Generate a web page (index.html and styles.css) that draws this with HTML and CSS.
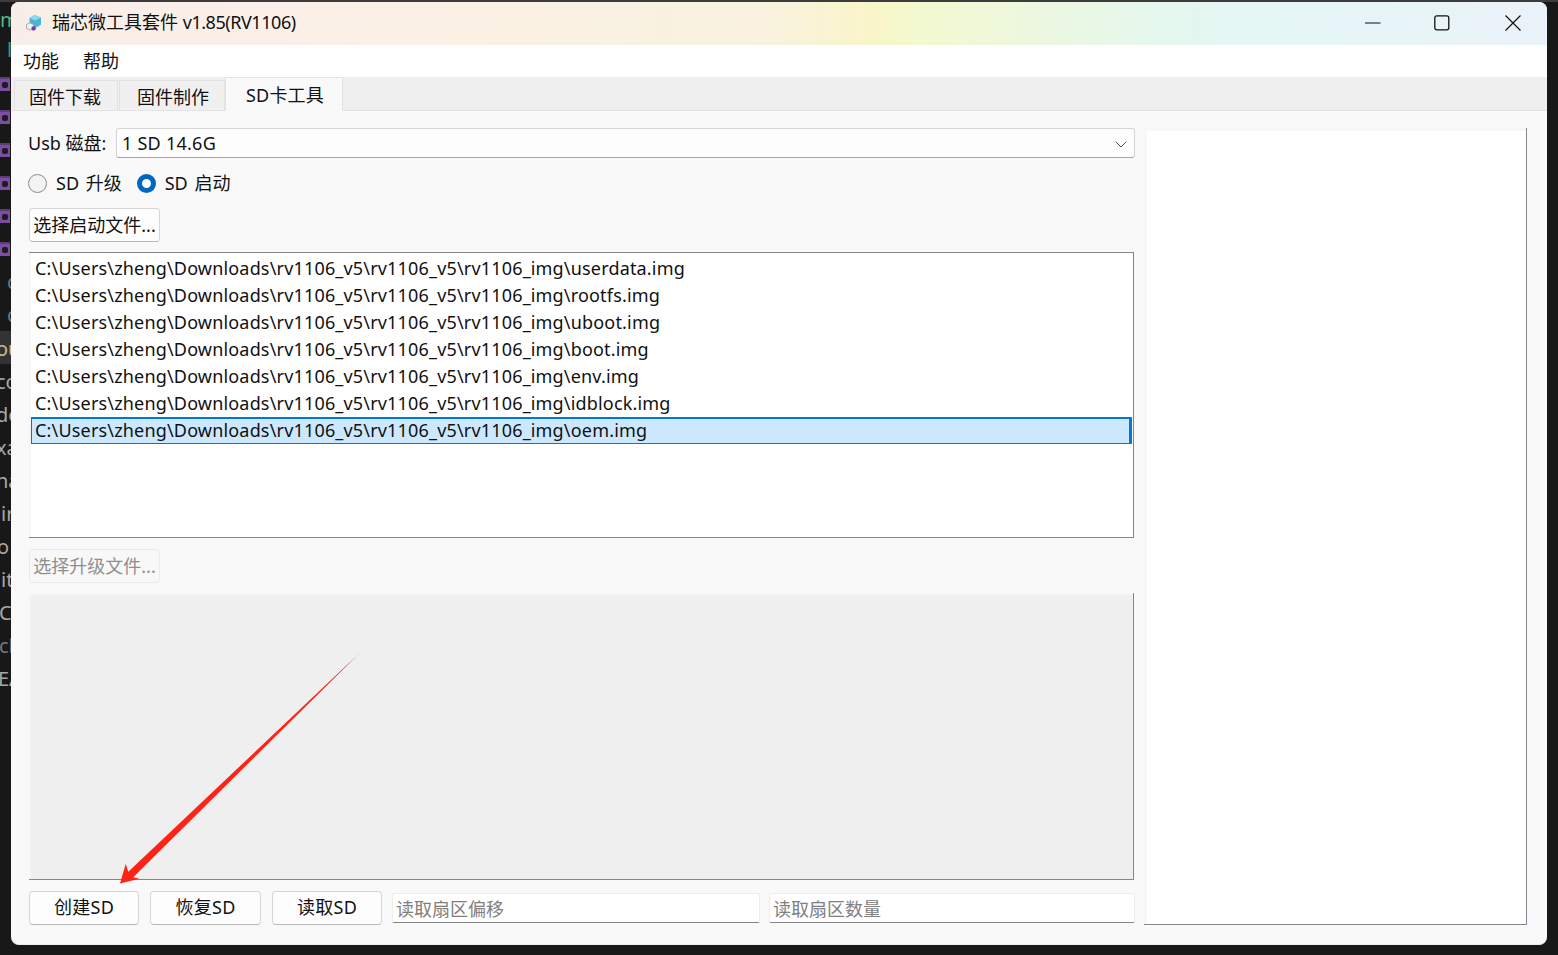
FILE: index.html
```html
<!DOCTYPE html>
<html lang="zh-CN">
<head>
<meta charset="utf-8">
<title>瑞芯微工具套件</title>
<link rel="stylesheet" href="styles.css">
</head>
<body>
<div class="desktop">
  <div class="desk-strip"></div>
  <span class="frag fg-green f1">m</span>
  <span class="frag fg-teal f2">l</span>
  <span class="pic p1"></span><span class="pic p2"></span><span class="pic p3"></span><span class="pic p4"></span><span class="pic p5"></span><span class="pic p6"></span>
  <span class="frag fg-blue f3">c</span>
  <span class="frag fg-blue f4">c</span>
  <span class="frag f5">ou</span>
  <span class="frag f6">co</span>
  <span class="frag f7">de</span>
  <span class="frag f8">xa</span>
  <span class="frag f9">na</span>
  <span class="frag f10">ir</span>
  <span class="frag f11">o</span>
  <span class="frag f12">it</span>
  <span class="frag f13">C</span>
  <span class="frag f14">cl</span>
  <span class="frag f15">EA</span>
</div>
<main class="window">
  <header class="titlebar">
    <svg class="app-icon" viewBox="0 0 18 18" aria-hidden="true">
      <path d="M9.5 1 16 3.6v7.2L10.2 14 4.5 11V4z" fill="#4cb4d6"/>
      <path d="M9.5 1 16 3.6 10.4 6.6 4.5 4z" fill="#8fd8ec"/>
      <path d="M1.5 10.5 5 8.8l3.6 1.7v3.8L5 16.2l-3.5-1.9z" fill="#f1f1f1" stroke="#9a9a9a" stroke-width=".8"/>
      <circle cx="8.6" cy="14.4" r="2.2" fill="#7a35b5"/>
    </svg>
    <span class="title-text">瑞芯微工具套件 <span class="title-ver">v1.85(RV1106)</span></span>
    <div class="caption">
      <svg class="cap cap-min" viewBox="0 0 16 16" aria-hidden="true"><path d="M0 8h15.5" stroke="#111" stroke-width="1.1" fill="none"/></svg>
      <svg class="cap cap-max" viewBox="0 0 16 16" aria-hidden="true"><rect x=".8" y=".8" width="14" height="14" rx="2" stroke="#111" stroke-width="1.3" fill="none"/></svg>
      <svg class="cap cap-close" viewBox="0 0 16 16" aria-hidden="true"><path d="M.5.5l15 15M15.5.5l-15 15" stroke="#111" stroke-width="1.2" fill="none"/></svg>
    </div>
  </header>
  <nav class="menubar">
    <span class="menu-item">功能</span>
    <span class="menu-item">帮助</span>
  </nav>
  <div class="tabbar">
    <span class="tab tab-a">固件下载</span>
    <span class="tab tab-b">固件制作</span>
    <span class="tab tab-active">SD卡工具</span>
  </div>
  <section class="content">
    <div class="main-col">
      <div class="usb-row">
        <label class="usb-label">Usb 磁盘:</label>
        <div class="combo">
          <span>1 SD 14.6G</span>
          <svg class="chev" viewBox="0 0 12 7" aria-hidden="true"><path d="M.7.7 6 6l5.300-5.300" stroke="#555" stroke-width="1" fill="none"/></svg>
        </div>
      </div>
      <div class="radio-row">
        <span class="radio"></span><span class="radio-label radio-label-first">SD 升级</span>
        <span class="radio radio-on"></span><span class="radio-label">SD 启动</span>
      </div>
      <button class="btn btn-file" type="button">选择启动文件...</button>
      <ul class="file-list">
        <li>C:\Users\zheng\Downloads\rv1106_v5\rv1106_v5\rv1106_img\userdata.img</li>
        <li>C:\Users\zheng\Downloads\rv1106_v5\rv1106_v5\rv1106_img\rootfs.img</li>
        <li>C:\Users\zheng\Downloads\rv1106_v5\rv1106_v5\rv1106_img\uboot.img</li>
        <li>C:\Users\zheng\Downloads\rv1106_v5\rv1106_v5\rv1106_img\boot.img</li>
        <li>C:\Users\zheng\Downloads\rv1106_v5\rv1106_v5\rv1106_img\env.img</li>
        <li>C:\Users\zheng\Downloads\rv1106_v5\rv1106_v5\rv1106_img\idblock.img</li>
        <li class="selected">C:\Users\zheng\Downloads\rv1106_v5\rv1106_v5\rv1106_img\oem.img</li>
      </ul>
      <button class="btn btn-file btn-disabled" type="button">选择升级文件...</button>
      <div class="gray-panel"></div>
      <div class="bottom-row">
        <button class="btn btn-b1" type="button">创建SD</button>
        <button class="btn btn-b2" type="button">恢复SD</button>
        <button class="btn btn-b3" type="button">读取SD</button>
        <div class="field field-a">读取扇区偏移</div>
        <div class="field field-b">读取扇区数量</div>
      </div>
    </div>
    <div class="side-panel"></div>
  </section>
</main>
<svg class="arrow" viewBox="0 0 1558 955" aria-hidden="true">
  <defs>
    <linearGradient id="tail" gradientUnits="userSpaceOnUse" x1="362" y1="651" x2="348" y2="665">
      <stop offset="0" stop-color="#ff2317" stop-opacity=".3"/>
      <stop offset="1" stop-color="#ff2317"/>
    </linearGradient>
  </defs>
  <path d="M361.700 651 133.300 877.300 139.300 878.700 120 883.500 125.700 864 128.300 871.700z" fill="url(#tail)"/>
</svg>
</body>
</html>
```
FILE: styles.css
```css
* { box-sizing: border-box; }
html, body { margin: 0; height: 100%; overflow: hidden; }
body {
  position: relative;
  width: 1558px;
  height: 955px;
  padding: 2px 11px 10px;
  background: #181818;
  font: 18px/1.2 "Noto Sans", "Noto Sans CJK SC", sans-serif;
  color: #111;
}

/* Desktop fragments behind the window */
.desktop { position: absolute; inset: 0; overflow: hidden; }
.desktop::before {
  content: "";
  position: absolute;
  left: 0; right: 0; top: 0;
  height: 2px;
  background: #3c3c3c;
}
.desk-strip {
  position: absolute;
  left: 0; top: 331px;
  width: 11px; height: 33px;
  background: #333;
}
.frag {
  position: absolute;
  left: -4px;
  font: 20px/24px "Noto Sans", sans-serif;
  color: #a8a8a8;
  white-space: nowrap;
}
.fg-green { color: #4fb98a; }
.fg-teal { color: #2f9c8e; }
.fg-blue { color: #5c7fa0; }
.f1 { top: 8px; left: 0; }
.f2 { top: 38px; left: 7px; }
.f3 { top: 270px; left: 7px; }
.f4 { top: 303px; left: 7px; }
.f5 { top: 337px; color: #c9b98a; }
.f6 { top: 370px; }
.f7 { top: 403px; }
.f8 { top: 436px; }
.f9 { top: 469px; }
.f10 { top: 502px; left: 1px; }
.f11 { top: 535px; left: -3px; }
.f12 { top: 568px; left: 1px; }
.f13 { top: 601px; left: -1px; }
.f14 { top: 634px; color: #777; left: -1px; }
.f15 { top: 667px; left: -2px; }
.pic {
  position: absolute;
  left: 0;
  width: 10px; height: 14px;
  background: #7a4f9f;
  border-top: 2px solid #5b3b7a;
}
.pic::after {
  content: "";
  position: absolute;
  left: 2px; top: 3px;
  width: 6px; height: 6px;
  background: #1f1a24;
  border-radius: 2px;
}
.p1 { top: 77px; } .p2 { top: 110px; } .p3 { top: 143px; }
.p4 { top: 176px; } .p5 { top: 209px; } .p6 { top: 242px; }

/* Window */
.window {
  position: relative;
  width: 1536px;
  height: 943px;
  border-radius: 8px;
  overflow: hidden;
  display: flex;
  flex-direction: column;
  background: #f9f9f9;
  border-bottom: 1px solid #ececec;
}
.titlebar {
  flex: none;
  height: 43px;
  display: flex;
  align-items: center;
  padding: 0 0 2px 14px;
  background: linear-gradient(90deg, #f8eee9 0%, #fbf0e8 19%, #f9f2de 50%, #faf5c8 56%, #f3f9cf 59%, #ebf7e2 68%, #e3f7f1 77%, #e6f5f8 87%, #ebf2f9 100%);
}
.app-icon { width: 18px; height: 18px; flex: none; }
.title-text { margin-left: 9px; font-size: 18px; }
.title-ver { letter-spacing: -.45px; }
.caption { margin-left: auto; display: flex; align-items: center; padding-right: 26px; }
.cap { display: block; }
.cap-min { width: 16px; height: 16px; margin-right: 53px; }
.cap-max { width: 16px; height: 16px; margin-right: 55px; }
.cap-close { width: 16px; height: 16px; }

.menubar {
  flex: none;
  height: 32px;
  background: #fff;
  display: flex;
  align-items: center;
  gap: 24px;
  padding: 2px 0 0 12px;
}
.tabbar {
  flex: none;
  height: 34px;
  background: #efefef;
  display: flex;
  align-items: flex-end;
  padding-left: 3px;
  border-bottom: 1px solid #e3e3e3;
}
.tab {
  height: 30px;
  display: flex;
  align-items: center;
  justify-content: center;
  background: #f0f0f0;
  border: 1px solid #e2e2e2;
  border-bottom: 0;
  margin-right: 1px;
  padding-top: 4px;
  position: relative;
}
.tab-a { width: 104px; padding-right: 2px; }
.tab-b { width: 106px; margin-right: 0; padding-left: 2px; }
.tab-active {
  width: 118px;
  height: 34px;
  margin-bottom: -1px;
  background: #f9f9f9;
  padding: 2px 0 0 2px;
  letter-spacing: .2px;
}

.content {
  flex: 1;
  min-height: 0;
  display: flex;
  gap: 9px;
  padding: 17px 20px 0 18px;
}
.main-col {
  width: 1106px;
  flex: none;
  display: flex;
  flex-direction: column;
  align-items: flex-start;
}
.usb-row { display: flex; align-items: center; width: 100%; height: 30px; }
.usb-label { margin-left: -1px; width: 88px; flex: none; padding-top: 1px; }
.combo {
  flex: none;
  width: 1019px;
  height: 30px;
  display: flex;
  align-items: center;
  justify-content: space-between;
  padding: 2px 7px 0 5px;
  background: #fdfdfd;
  border: 1px solid #d4d4d4;
  border-bottom-color: #a5a5a5;
  border-radius: 3px;
  letter-spacing: .25px;
}
.chev { width: 12px; height: 7px; }
.radio-row { display: flex; align-items: center; height: 19px; margin-top: 16px; margin-left: -1px; }
.radio {
  width: 19px; height: 19px;
  border-radius: 50%;
  border: 1px solid #8b8b8b;
  background: #f3f3f3;
  flex: none;
}
.radio-on { border: 5px solid #0067c0; background: #fff; }
.radio-label { margin-left: 9px; margin-right: 16px; word-spacing: 2px; }
.radio-label-first { margin-right: 15px; }

.btn {
  font: inherit;
  color: inherit;
  padding: 0;
  background: #fdfdfd;
  border: 1px solid #d6d6d6;
  border-bottom-color: #b8b8b8;
  border-radius: 4px;
  height: 34px;
  line-height: 30px;
  white-space: nowrap;
  flex: none;
}
.btn-file { width: 131px; margin-top: 15px; }
.btn-disabled {
  margin-top: 11px;
  color: #8f8f8f;
  background: #f8f8f8;
  border-color: #ebebeb;
}
.file-list {
  list-style: none;
  margin: 10px 0 0;
  padding: 2px 2px 0;
  width: 1105px;
  height: 286px;
  background: #fff;
  border: solid #85858f;
  border-width: 1px 1px 1px 0;
  box-shadow: inset 2px 0 0 #f5f5f5;
  letter-spacing: .175px;
}
.file-list li {
  height: 27px;
  line-height: 27px;
  padding-left: 4px;
  white-space: nowrap;
}
.file-list .selected {
  background: #cce8ff;
  border: solid #0078d4;
  border-width: 2px 3px 1px 1px;
  line-height: 23px;
  padding-left: 3px;
  margin-right: -1px;
}
.gray-panel {
  width: 1105px;
  height: 287px;
  margin-top: 10px;
  background: #efefef;
  border: solid #85858f;
  border-width: 0 1px 1px 0;
  box-shadow: inset 2px 2px 0 #f6f6f6;
}
.bottom-row { display: flex; align-items: center; height: 34px; margin-top: 11px; width: 100%; }
.bottom-row .btn { padding-bottom: 2px; letter-spacing: .3px; }
.btn-b1 { width: 110px; margin-right: 11px; }
.btn-b2 { width: 111px; margin-right: 11px; }
.btn-b3 { width: 110px; margin-right: 10px; }
.field {
  height: 30px;
  line-height: 30px;
  padding-left: 3px;
  background: #fff;
  color: #808080;
  border: 1px solid #ededed;
  border-bottom-color: #848484;
  border-radius: 2px;
  flex: none;
}
.field-a { width: 368px; margin-right: 9px; }
.field-b { width: 366px; }
.side-panel {
  width: 383px;
  height: 797px;
  flex: none;
  background: #fff;
  border: solid #85858f;
  border-width: 0 1px 1px 0;
  box-shadow: inset 3px 3px 0 #f7f7f7;
}

.arrow {
  position: absolute;
  left: 0; top: 0;
  width: 1558px; height: 955px;
  pointer-events: none;
}
```
